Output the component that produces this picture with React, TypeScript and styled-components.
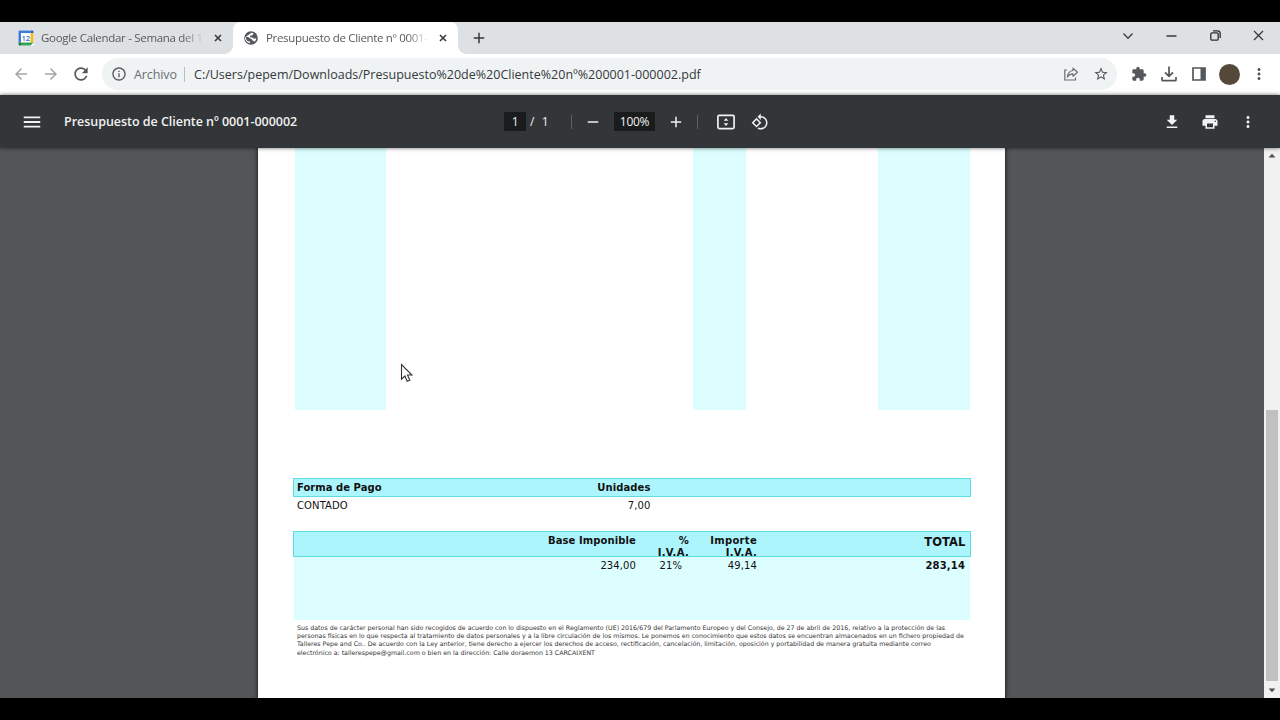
import React from "react";
import styled, { createGlobalStyle } from "styled-components";

const UI_FONT = '"Open Sans", "Noto Sans", sans-serif';
const DOC_FONT = '"DejaVu Sans", sans-serif';

const GlobalStyle = createGlobalStyle`
  *, *::before, *::after { box-sizing: border-box; }
  body { margin: 0; background: #000; overflow: hidden; }
  svg { display: block; flex: none; }
`;

const Screen = styled.div`
  width: 1280px;
  height: 720px;
  padding: 22px 0;
  background: #000;
  font-family: ${UI_FONT};
  position: relative;
  overflow: hidden;
`;

const Browser = styled.div`
  height: 676px;
  display: flex;
  flex-direction: column;
`;

/* ---------- tab strip ---------- */

const TabStrip = styled.div`
  height: 32px;
  display: flex;
  background: #dee1e3;
  padding-left: 8px;
`;

const Tab = styled.div<{ $active?: boolean; $width: number }>`
  width: ${(p) => p.$width}px;
  height: 32px;
  display: flex;
  align-items: center;
  padding: 0 7px 0 10px;
  border-radius: 8px 8px 0 0;
  background: ${(p) => (p.$active ? "#fff" : "transparent")};
  position: relative;

  &::before, &::after {
    content: "";
    display: ${(p) => (p.$active ? "block" : "none")};
    position: absolute;
    bottom: 0;
    width: 8px;
    height: 8px;
  }
  &::before { left: -8px; background: radial-gradient(circle at 0 0, transparent 7.5px, #fff 8px); }
  &::after { right: -8px; background: radial-gradient(circle at 100% 0, transparent 7.5px, #fff 8px); }
`;

const TabTitle = styled.span<{ $spacing: number }>`
  flex: 1;
  margin-left: 7px;
  overflow: hidden;
  white-space: nowrap;
  font-size: 11.5px;
  line-height: 20px;
  letter-spacing: ${(p) => p.$spacing}px;
  color: #55595d;
  mask-image: linear-gradient(to right, #000 calc(100% - 20px), rgba(0, 0, 0, 0.1));
`;

const TabClose = styled.span`
  width: 16px;
  margin-left: 8px;
  display: flex;
  justify-content: center;
`;

const NewTab = styled.div`
  width: 42px;
  display: flex;
  align-items: center;
  justify-content: center;
`;

const WindowControls = styled.div`
  margin-left: auto;
  height: 27px;
  display: flex;
`;

const WindowButton = styled.div`
  width: 43.3px;
  display: flex;
  align-items: center;
  justify-content: center;
`;

/* ---------- address bar ---------- */

const AddressBar = styled.div`
  height: 41px;
  display: flex;
  align-items: center;
  padding: 0 5px 1px 6px;
  background: #fff;
`;

const Slot = styled.div<{ $width?: number }>`
  width: ${(p) => p.$width ?? 30}px;
  flex: none;
  display: flex;
  align-items: center;
  justify-content: center;
`;

const Omnibox = styled.div`
  width: 1015px;
  height: 32px;
  margin: 0 7px 0 6px;
  display: flex;
  align-items: center;
  padding: 0 1px 0 2px;
  border-radius: 16px;
  background: #eff3f4;
  font-size: 12.5px;
`;

const Scheme = styled.span`
  width: 50px;
  white-space: nowrap;
  letter-spacing: -0.1px;
  color: #6a6e72;
`;

const Separator = styled.span<{ $color: string; $height: number }>`
  width: 1px;
  height: ${(p) => p.$height}px;
  flex: none;
  background: ${(p) => p.$color};
`;

const Url = styled.span`
  flex: 1;
  padding-left: 9px;
  white-space: nowrap;
  font-size: 12.5px;
  letter-spacing: 0.005px;
  color: #35383b;
`;

const Avatar = styled.div`
  width: 21px;
  height: 21px;
  border-radius: 50%;
  background: #54483b;
`;

/* ---------- PDF viewer ---------- */

const PdfToolbar = styled.div`
  height: 53px;
  flex: none;
  display: flex;
  align-items: center;
  padding: 0 13px 0 17px;
  background: #323639;
  color: #f1f1f1;
  box-shadow: 0 0 4px rgba(0, 0, 0, 0.6);
  position: relative;
  z-index: 1;
  font-size: 12px;
`;

const PdfTitle = styled.div`
  width: 457px;
  padding-left: 17px;
  white-space: nowrap;
  font-size: 12.5px;
  font-weight: 600;
  letter-spacing: -0.03px;
`;

const DarkField = styled.div<{ $width: number }>`
  width: ${(p) => p.$width}px;
  height: 19px;
  line-height: 19px;
  text-align: center;
  letter-spacing: -0.3px;
  background: #191b1c;
`;

const PageCount = styled.div`
  width: 45px;
  padding-left: 4px;
  white-space: pre;
  word-spacing: 0.5px;
`;

const PdfActions = styled.div`
  margin-left: auto;
  display: flex;
`;

const Viewer = styled.div`
  flex: 1;
  min-height: 0;
  display: flex;
  background: #525659;
`;

const Canvas = styled.div`
  flex: 1;
  padding-left: 258px;
`;

const Page = styled.div`
  width: 747px;
  height: 550px;
  padding: 0 34px 0 35px;
  background: #fff;
  box-shadow: 0 0 4px 1px rgba(0, 0, 0, 0.6);
  font-family: ${DOC_FONT};
  color: #111;
`;

const ColumnBands = styled.div`
  height: 262px;
  margin-left: 2px;
  display: flex;
`;

const Band = styled.div<{ $width: number; $tinted?: boolean }>`
  width: ${(p) => p.$width}px;
  background: ${(p) => (p.$tinted ? "#dcfefe" : "transparent")};
`;

const HeaderRow = styled.div<{ $height: number; $top: number }>`
  height: ${(p) => p.$height}px;
  margin-top: ${(p) => p.$top}px;
  display: flex;
  border: 1px solid #5fdce1;
  background: #adf5fd;
  font-weight: bold;
`;

const ValueRow = styled.div<{ $height: number; $tinted?: boolean }>`
  height: ${(p) => p.$height}px;
  margin: 0 1px;
  display: flex;
  background: ${(p) => (p.$tinted ? "#dcfefe" : "transparent")};
`;

const Cell = styled.div<{
  $width: number;
  $left?: boolean;
  $top?: number;
  $size?: number;
  $bold?: boolean;
  $spacing?: number;
}>`
  width: ${(p) => p.$width}px;
  flex: none;
  padding-top: ${(p) => p.$top ?? 3}px;
  padding-left: ${(p) => (p.$left ? 3 : 0)}px;
  text-align: ${(p) => (p.$left ? "left" : "right")};
  white-space: nowrap;
  font-size: ${(p) => p.$size ?? 10}px;
  font-weight: ${(p) => (p.$bold ? "bold" : "inherit")};
  letter-spacing: ${(p) => p.$spacing ?? 0.1}px;
  line-height: 12px;
`;

const Legal = styled.div`
  padding: 4px 0 0 4px;
  color: #333;
`;

const LegalLine = styled.div`
  font-size: 6.29px;
  line-height: 8.2px;
  white-space: nowrap;
`;

const Scrollbar = styled.div`
  width: 16px;
  display: flex;
  flex-direction: column;
  align-items: center;
  justify-content: space-between;
  background: #f1f1f1;
`;

const ScrollArrow = styled.div<{ $down?: boolean }>`
  height: 15px;
  display: flex;
  align-items: center;
  transform: ${(p) => (p.$down ? "rotate(180deg)" : "none")};
`;

const ScrollTrack = styled.div`
  flex: 1;
  width: 12px;
  display: flex;
  align-items: flex-end;
  padding-bottom: 2px;
`;

const ScrollThumb = styled.div`
  width: 12px;
  height: 271px;
  background: #c1c1c1;
`;

const Pointer = styled.div`
  position: absolute;
  left: 400px;
  top: 363px;
`;

/* ---------- icons ---------- */

interface IconProps {
  d: string;
  size?: number;
  color?: string;
}

const Icon = ({ d, size = 18, color = "#54585c" }: IconProps) => (
  <svg width={size} height={size} viewBox="0 0 24 24" fill={color}>
    <path d={d} />
  </svg>
);

const paths = {
  back: "M20 11H7.83l5.59-5.59L12 4l-8 8 8 8 1.41-1.41L7.83 13H20v-2z",
  forward: "M12 4l-1.41 1.41L16.17 11H4v2h12.17l-5.58 5.59L12 20l8-8z",
  reload:
    "M17.65 6.35C16.2 4.9 14.21 4 12 4c-4.42 0-7.99 3.58-7.99 8s3.57 8 7.99 8c3.73 0 6.84-2.55 7.73-6h-2.08c-.82 2.33-3.04 4-5.65 4-3.31 0-6-2.69-6-6s2.69-6 6-6c1.66 0 3.14.69 4.22 1.78L13 11h7V4l-2.35 2.35z",
  info: "M11 7h2v2h-2zm0 4h2v6h-2zm1-9C6.48 2 2 6.48 2 12s4.48 10 10 10 10-4.48 10-10S17.52 2 12 2zm0 18c-4.41 0-8-3.59-8-8s3.59-8 8-8 8 3.59 8 8-3.59 8-8 8z",
  star: "M22 9.24l-7.19-.62L12 2 9.19 8.63 2 9.24l5.46 4.73L5.82 21 12 17.27 18.18 21l-1.63-7.03L22 9.24zM12 15.4l-3.76 2.27 1-4.28-3.32-2.88 4.38-.38L12 6.1l1.71 4.04 4.38.38-3.32 2.88 1 4.28L12 15.4z",
  puzzle:
    "M20.5 11H19V7c0-1.1-.9-2-2-2h-4V3.5C13 2.12 11.88 1 10.5 1S8 2.12 8 3.5V5H4c-1.1 0-1.99.9-1.99 2v3.8H3.5c1.49 0 2.7 1.21 2.7 2.7s-1.21 2.7-2.7 2.7H2V20c0 1.1.9 2 2 2h3.8v-1.5c0-1.49 1.21-2.7 2.7-2.7 1.49 0 2.7 1.21 2.7 2.7V22H17c1.1 0 2-.9 2-2v-4h1.5c1.38 0 2.5-1.12 2.5-2.5S21.88 11 20.5 11z",
  more: "M12 8c1.1 0 2-.9 2-2s-.9-2-2-2-2 .9-2 2 .9 2 2 2zm0 2c-1.1 0-2 .9-2 2s.9 2 2 2 2-.9 2-2-.9-2-2-2zm0 6c-1.1 0-2 .9-2 2s.9 2 2 2 2-.9 2-2-.9-2-2-2z",
  menu: "M3 18h18v-2H3v2zm0-5h18v-2H3v2zm0-7v2h18V6H3z",
  minus: "M19 13H5v-2h14v2z",
  plus: "M19 13h-6v6h-2v-6H5v-2h6V5h2v6h6v2z",
  fileDownload: "M19 9h-4V3H9v6H5l7 7 7-7zM5 18v2h14v-2H5z",
  print:
    "M19 8H5c-1.66 0-3 1.34-3 3v6h4v4h12v-4h4v-6c0-1.66-1.34-3-3-3zm-3 11H8v-5h8v5zm3-7c-.55 0-1-.45-1-1s.45-1 1-1 1 .45 1 1-.45 1-1 1zm-1-9H6v4h12V3z",
  rotate:
    "M7.34 6.41L.86 12.9l6.49 6.48 6.49-6.48-6.5-6.49zM3.69 12.9l3.66-3.66L11 12.9l-3.66 3.66-3.65-3.66zm15.67-6.26C17.61 4.88 15.3 4 13 4V.76L8.76 5 13 9.24V6c1.79 0 3.58.68 4.95 2.05 2.73 2.73 2.73 7.17 0 9.9C16.58 19.32 14.79 20 13 20c-.97 0-1.94-.21-2.84-.61l-1.49 1.49C10.02 21.62 11.51 22 13 22c2.3 0 4.61-.88 6.36-2.64 3.52-3.51 3.52-9.21 0-12.72z",
};

const CloseIcon = ({ size, stroke }: { size: number; stroke: number }) => (
  <svg width={size} height={size} viewBox={`0 0 ${size} ${size}`} stroke="#36393c" strokeWidth={stroke}>
    <path d={`M1 1L${size - 1} ${size - 1}M${size - 1} 1L1 ${size - 1}`} />
  </svg>
);

const CalendarIcon = () => (
  <svg width="16" height="16" viewBox="0 0 16 16">
    <rect x="0.5" y="0.5" width="15" height="15" rx="1" fill="#fff" />
    <path d="M0.500 12.500V1.500a1 1 0 0 1 1-1h11V3H3v9.500z" fill="#4079d8" />
    <path d="M12.500 0.500h2a1 1 0 0 1 1 1V3h-3z" fill="#2460b8" />
    <path d="M12.500 3h3v9.500h-3z" fill="#f2bd2c" />
    <path d="M0.500 12.500h2.500v3H1.500a1 1 0 0 1-1-1z" fill="#18803a" />
    <path d="M3 12.500h12.500l-3 3H3z" fill="#38a357" />
    <text x="7.8" y="10.6" textAnchor="middle" fontSize="7.5" fontWeight="600" fontFamily="Open Sans" fill="#3470d0">
      12
    </text>
  </svg>
);

const GlobeIcon = () => (
  <svg width="16" height="16" viewBox="0 0 16 16">
    <circle cx="8" cy="8" r="6.8" fill="#54585c" />
    <path
      d="M8.300 2.700c.9.100 1.700.4 2.400.8L9.400 5.200 7.200 5.800 6.900 7.300l2.600.2 1.300 1.300 2.500-.6c-.1 1.300-.6 2.400-1.400 3.200l-1.800-.3-1.600-2.200-1.700-.6-1.600-1.400-2.400.2c0 1.500.6 2.900 1.600 3.900l2.500.4.3 1.700c-2.900-.3-5.200-2.400-5.200-5.600z"
      fill="#fff"
    />
  </svg>
);

const FitIcon = () => (
  <svg width="18" height="16" viewBox="0 0 18 16">
    <rect x="0.900" y="1.400" width="16.200" height="13.200" rx="1.300" fill="none" stroke="#f1f1f1" strokeWidth="1.700" />
    <path d="M9 4L6.700 6.800h4.600zM9 12L6.700 9.200h4.600z" fill="#f1f1f1" />
  </svg>
);

const ShareIcon = () => (
  <svg width="16" height="16" viewBox="0 0 16 16" fill="none" stroke="#6b6f73" strokeWidth="1.2">
    <path d="M4 4H1.800v10h10.700v-2.500" />
    <path d="M10 2.200l4.500 4-4.500 4V7.900C7.500 7.900 5.700 8.800 4.300 11c.4-3.500 2.200-6 5.700-6.500z" strokeLinejoin="round" />
  </svg>
);

const TrayDownloadIcon = () => (
  <svg width="16" height="16" viewBox="0 0 16 16" fill="none" stroke="#54585c" strokeWidth="1.7">
    <path d="M8 0.500v9.500M4 6.300l4 4 4-4M1 11v2.700a1 1 0 0 0 1 1h12a1 1 0 0 0 1-1V11" />
  </svg>
);

const SidePanelIcon = () => (
  <svg width="14" height="14" viewBox="0 0 14 14">
    <path d="M1 1h12v12H1z" fill="none" stroke="#54585c" strokeWidth="1.700" />
    <path d="M8.500 1H13v12H8.500z" fill="#54585c" />
  </svg>
);

const ChevronIcon = () => (
  <svg width="12" height="8" viewBox="0 0 12 8" fill="none" stroke="#3b3e41" strokeWidth="1.3">
    <path d="M1.500 1.500L6 6.200l4.500-4.700" />
  </svg>
);

const RestoreIcon = () => (
  <svg width="11" height="11" viewBox="0 0 11 11" fill="none" stroke="#2b2e30" strokeWidth="1.3">
    <rect x="0.8" y="2.8" width="7.4" height="7.4" rx="1.3" />
    <path d="M3 0.800h4.500a2.700 2.700 0 0 1 2.700 2.700V8" />
  </svg>
);

const MinimizeIcon = () => (
  <svg width="11" height="2" viewBox="0 0 11 2">
    <path d="M0.500 0.300h10v1.400h-10z" fill="#2b2e30" />
  </svg>
);

const ArrowGlyph = () => (
  <svg width="8" height="5" viewBox="0 0 8 5">
    <path d="M0.700 4.500L4 0.700l3.300 3.800z" fill="#4d4d4d" />
  </svg>
);

const legalLines = [
  "Sus datos de carácter personal han sido recogidos de acuerdo con lo dispuesto en el Reglamento (UE) 2016/679 del Parlamento Europeo y del Consejo, de 27 de abril de 2016, relativo a la protección de las",
  "personas físicas en lo que respecta al tratamiento de datos personales y a la libre circulación de los mismos. Le ponemos en conocimiento que estos datos se encuentran almacenados en un fichero propiedad de",
  "Talleres Pepe and Co.. De acuerdo con la Ley anterior, tiene derecho a ejercer los derechos de acceso, rectificación, cancelación, limitación, oposición y portabilidad de manera gratuita mediante correo",
  "electrónico a: tallerespepe@gmail.com o bien en la dirección: Calle doraemon 13 CARCAIXENT",
];

export default function App() {
  return (
    <Screen>
      <GlobalStyle />
      <Browser>
        <TabStrip>
          <Tab $width={225}>
            <CalendarIcon />
            <TabTitle $spacing={-0.3}>Google Calendar - Semana del 1</TabTitle>
            <TabClose><CloseIcon size={8} stroke={1.6} /></TabClose>
          </Tab>
          <Tab $width={225} $active>
            <GlobeIcon />
            <TabTitle $spacing={-0.32}>Presupuesto de Cliente nº 0001-</TabTitle>
            <TabClose><CloseIcon size={8} stroke={1.6} /></TabClose>
          </Tab>
          <NewTab><Icon d={paths.plus} size={18} color="#36393c" /></NewTab>
          <WindowControls>
            <WindowButton><ChevronIcon /></WindowButton>
            <WindowButton><MinimizeIcon /></WindowButton>
            <WindowButton><RestoreIcon /></WindowButton>
            <WindowButton><CloseIcon size={11} stroke={1.3} /></WindowButton>
          </WindowControls>
        </TabStrip>

        <AddressBar>
          <Slot><Icon d={paths.back} color="#a3a6a8" /></Slot>
          <Slot><Icon d={paths.forward} color="#a3a6a8" /></Slot>
          <Slot><Icon d={paths.reload} size={20} /></Slot>
          <Omnibox>
            <Slot><Icon d={paths.info} size={16} /></Slot>
            <Scheme>Archivo</Scheme>
            <Separator $color="#b9bdc0" $height={15} />
            <Url>C:/Users/pepem/Downloads/Presupuesto%20de%20Cliente%20nº%200001-000002.pdf</Url>
            <Slot><ShareIcon /></Slot>
            <Slot><Icon d={paths.star} size={16} /></Slot>
          </Omnibox>
          <Slot><Icon d={paths.puzzle} size={16} /></Slot>
          <Slot><TrayDownloadIcon /></Slot>
          <Slot><SidePanelIcon /></Slot>
          <Slot><Avatar /></Slot>
          <Slot><Icon d={paths.more} size={18} /></Slot>
        </AddressBar>

        <PdfToolbar>
          <Slot><Icon d={paths.menu} size={22} color="#f1f1f1" /></Slot>
          <PdfTitle>Presupuesto de Cliente nº 0001-000002</PdfTitle>
          <DarkField $width={22}>1</DarkField>
          <PageCount>/  1</PageCount>
          <Separator $color="#5d6164" $height={14} />
          <Slot $width={42}><Icon d={paths.minus} color="#f1f1f1" /></Slot>
          <DarkField $width={41}>100%</DarkField>
          <Slot $width={42}><Icon d={paths.plus} color="#f1f1f1" /></Slot>
          <Separator $color="#5d6164" $height={14} />
          <Slot $width={56}><FitIcon /></Slot>
          <Slot $width={12}><Icon d={paths.rotate} color="#f1f1f1" /></Slot>
          <PdfActions>
            <Slot $width={38}><Icon d={paths.fileDownload} color="#f1f1f1" /></Slot>
            <Slot $width={38}><Icon d={paths.print} color="#f1f1f1" /></Slot>
            <Slot $width={38}><Icon d={paths.more} color="#f1f1f1" /></Slot>
          </PdfActions>
        </PdfToolbar>

        <Viewer>
          <Canvas>
            <Page>
              <ColumnBands>
                <Band $width={91} $tinted />
                <Band $width={307} />
                <Band $width={53} $tinted />
                <Band $width={132} />
                <Band $width={92} $tinted />
              </ColumnBands>

              <HeaderRow $height={19} $top={68}>
                <Cell $width={180} $left $spacing={0.03}>Forma de Pago</Cell>
                <Cell $width={176.5}>Unidades</Cell>
              </HeaderRow>
              <ValueRow $height={34}>
                <Cell $width={180} $left>CONTADO</Cell>
                <Cell $width={176.5}>7,00</Cell>
              </ValueRow>

              <HeaderRow $height={26} $top={0}>
                <Cell $width={342}>Base Imponible</Cell>
                <Cell $width={53} $spacing={0.3}>%<br />I.V.A.</Cell>
                <Cell $width={68} $spacing={0.3}>Importe<br />I.V.A.</Cell>
                <Cell $width={208.5} $size={11.5} $top={4}>TOTAL</Cell>
              </HeaderRow>
              <ValueRow $height={63} $tinted>
                <Cell $width={342}>234,00</Cell>
                <Cell $width={46}>21%</Cell>
                <Cell $width={75}>49,14</Cell>
                <Cell $width={208} $bold $spacing={0.15}>283,14</Cell>
              </ValueRow>

              <Legal>
                {legalLines.map((text) => (
                  <LegalLine key={text}>{text}</LegalLine>
                ))}
              </Legal>
            </Page>
          </Canvas>
          <Scrollbar>
            <ScrollArrow><ArrowGlyph /></ScrollArrow>
            <ScrollTrack><ScrollThumb /></ScrollTrack>
            <ScrollArrow $down><ArrowGlyph /></ScrollArrow>
          </Scrollbar>
        </Viewer>
      </Browser>

      <Pointer>
        <svg width="13" height="20" viewBox="0 0 13 20">
          <path d="M1.500 1.500v14.700l3.400-3.200 2.300 5.300 2.600-1.100-2.300-5.200h4.400z" fill="#fff" stroke="#333" strokeWidth="1.1" />
        </svg>
      </Pointer>
    </Screen>
  );
}
